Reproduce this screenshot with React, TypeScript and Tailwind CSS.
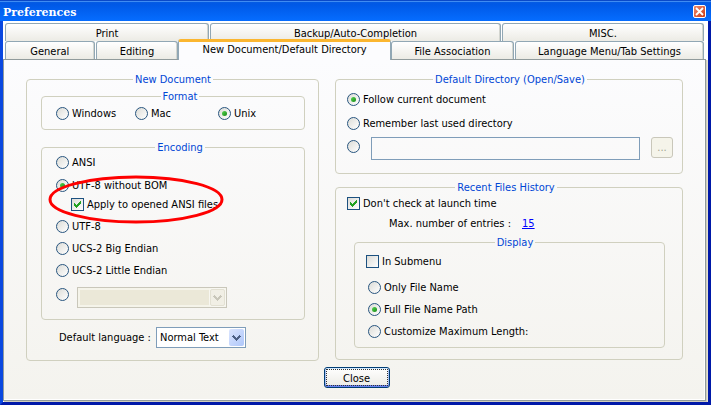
import type { ReactNode } from "react";

type TabProps = { label: string; width: string };

function Tab({ label, width }: TabProps) {
  return (
    <button
      type="button"
      role="tab"
      aria-selected={false}
      className={`${width} h-[18px] min-w-0 whitespace-nowrap rounded-t-[3px] border border-b-0 border-[#91a7b4] bg-linear-to-b from-white to-[#ecebe5] pt-[2px] text-center leading-[15px] shadow-[inset_-1px_0_0_#d3d5cf]`}
    >
      {label}
    </button>
  );
}

type GroupProps = { title: string; className?: string; children: ReactNode };

function Group({ title, className = "", children }: GroupProps) {
  return (
    <fieldset className={`min-w-0 rounded-[4px] border border-[#d0d0bf] ${className}`}>
      <legend className="mx-auto px-[2px] leading-[13px] text-[#0046d5]">{title}</legend>
      {children}
    </fieldset>
  );
}

type ChoiceProps = { label: string; name?: string; checked?: boolean; hideLabel?: boolean };

function RadioChoice({ label, name, checked = false, hideLabel = false }: ChoiceProps) {
  return (
    <label className="flex h-[15px] items-center gap-[3px] whitespace-nowrap">
      <span className="grid shrink-0 place-items-center">
        <input
          type="radio"
          name={name}
          defaultChecked={checked}
          aria-label={hideLabel ? label : undefined}
          className="peer col-start-1 row-start-1 size-[13px] appearance-none rounded-full border border-[#28557f] bg-linear-to-br from-[#dcdcd7] to-white"
        />
        <span className="pointer-events-none col-start-1 row-start-1 hidden size-[5px] rounded-full bg-linear-to-br from-[#55d551] to-[#138a12] peer-checked:block" />
      </span>
      {!hideLabel && <span className="pt-[2px]">{label}</span>}
    </label>
  );
}

function CheckChoice({ label, checked = false }: ChoiceProps) {
  return (
    <label className="flex h-[15px] items-center gap-[3px] whitespace-nowrap">
      <span className="grid shrink-0 place-items-center">
        <input
          type="checkbox"
          defaultChecked={checked}
          className="peer col-start-1 row-start-1 size-[13px] appearance-none border border-[#1c5180] bg-linear-to-br from-[#dcdcd7] to-white"
        />
        <svg
          viewBox="0 0 7 7"
          className="pointer-events-none col-start-1 row-start-1 hidden size-[7px] fill-[#21a121] peer-checked:block"
          shapeRendering="crispEdges"
          aria-hidden="true"
        >
          <path d="M0 2h1v1h1v1h1V3h1V2h1V1h1V0h1v3H6v1H5v1H4v1H3v1H2V6H1V5H0z" />
        </svg>
      </span>
      <span className="pt-[2px]">{label}</span>
    </label>
  );
}

function Chevron({ className }: { className: string }) {
  return (
    <svg viewBox="0 0 9 6" className={`h-[6px] w-[9px] ${className}`} shapeRendering="crispEdges" aria-hidden="true">
      <path d="M0 1h1V0h1v1h1v1h1v1h1V2h1V1h1V0h1v1h1v1H8v1H7v1H6v1H5v1H4V5H3V4H2V3H1V2H0z" />
    </svg>
  );
}

export default function App() {
  return (
    <div className="bg-[#0831d9] font-['DejaVu_Sans_Condensed','Noto_Sans',sans-serif] text-[11px] text-black">
      <header className="flex h-[21px] items-center justify-between bg-linear-to-b from-[#0b5fe0] from-0% via-[#0058e6] via-20% to-[#066dff] pr-[5px] pl-[3px] shadow-[inset_0_1px_0_#0a49c8,inset_0_2px_0_#3f8cf3]">
        <h1 className="pt-[4px] font-['DejaVu_Serif',serif] text-[11px] leading-4 font-bold text-white">
          Preferences
        </h1>
        <button
          type="button"
          aria-label="Close window"
          className="mt-[2px] grid size-[13px] place-items-center rounded-[2px] border border-white bg-linear-to-br from-[#ee8a6c] to-[#c9370c]"
        >
          <svg viewBox="0 0 9 9" className="size-[9px] stroke-white" strokeWidth="1.8" aria-hidden="true">
            <path d="M1 1L8 8M8 1L1 8" />
          </svg>
        </button>
      </header>

      <div className="border-r-[3px] border-b-[3px] border-l-[3px] border-r-[#0019a8] border-b-[#0019a8] border-l-[#0a48e0]">
        <main className="bg-white pr-[1px] pb-[1px] text-center">
          <div className="pr-[3px] pl-[2px] pt-[2px]">
            <div role="tablist" aria-label="More preference pages" className="flex gap-px">
              <Tab label="Print" width="flex-[204]" />
              <Tab label="Backup/Auto-Completion" width="flex-[291]" />
              <Tab label="MISC." width="flex-[202]" />
            </div>
            <div role="tablist" aria-label="Preference pages" className="flex gap-px">
              <Tab label="General" width="flex-[89]" />
              <Tab label="Editing" width="flex-[82]" />
              <button
                type="button"
                role="tab"
                aria-selected={true}
                className="relative z-10 -mx-px -mt-[2px] -mb-px h-[21px] min-w-0 flex-[214] whitespace-nowrap rounded-t-[3px] border-x border-t-[3px] border-x-[#91a7b4] border-t-[#fbb630] bg-[#fcfcfe] pb-[3px] leading-[15px]"
              >
                New Document/Default Directory
              </button>
              <Tab label="File Association" width="flex-[123]" />
              <Tab label="Language Menu/Tab Settings" width="flex-[190]" />
            </div>
          </div>

          <div
            role="tabpanel"
            aria-label="New Document/Default Directory"
            className="mr-px border border-[#919b9c] bg-linear-to-b from-[#fcfcfe] to-[#f4f3ee] px-[22px] pt-[13px] pb-[12px] text-left shadow-[1px_1px_0_0_#d0cebf,2px_1px_0_0_#e5e2d2,inset_-1px_-1px_0_0_#ffffff]"
          >
            <div className="grid grid-cols-[293fr_348fr] items-start gap-4">
              <Group title="New Document" className="pt-[4px] pr-[13px] pb-[12px] pl-[14px]">
                <Group title="Format" className="pt-[3px] pb-[8px] pl-[14px]">
                  <div className="grid grid-cols-[79px_83px_1fr]">
                    <RadioChoice name="format" label="Windows" />
                    <RadioChoice name="format" label="Mac" />
                    <RadioChoice name="format" label="Unix" checked />
                  </div>
                </Group>

                <Group title="Encoding" className="relative mt-[11px] pt-px pb-[11px] pl-[14px]">
                  <div className="flex flex-col items-start">
                    <RadioChoice name="encoding" label="ANSI" />
                    <div className="mt-2 flex flex-col gap-1">
                      <RadioChoice name="encoding" label="UTF-8 without BOM" checked />
                      <div className="pl-[15px]">
                        <CheckChoice label="Apply to opened ANSI files" checked />
                      </div>
                    </div>
                    <div className="mt-[7px] flex flex-col gap-[7px]">
                      <RadioChoice name="encoding" label="UTF-8" />
                      <RadioChoice name="encoding" label="UCS-2 Big Endian" />
                      <RadioChoice name="encoding" label="UCS-2 Little Endian" />
                    </div>
                    <div className="mt-[9px] flex items-start gap-[8px]">
                      <RadioChoice name="encoding" label="Other character set" hideLabel />
                      <div className="grid items-center">
                        <select
                          disabled
                          aria-label="Character set"
                          className="col-start-1 row-start-1 h-[21px] w-[150px] appearance-none border border-[#c9c7ba] bg-[#ebe8d8] opacity-100 shadow-[inset_0_0_0_2px_#f5f4ea]"
                        />
                        <span className="pointer-events-none col-start-1 row-start-1 mr-[2px] grid h-[17px] w-[15px] place-items-center justify-self-end rounded-[2px] border border-[#e3e1d3] bg-[#f1efe5] shadow-[0_0_0_1px_#f8f7f1]">
                          <Chevron className="fill-[#c9c7ba]" />
                        </span>
                      </div>
                    </div>
                  </div>
                  <svg
                    viewBox="0 0 176 49"
                    className="pointer-events-none absolute top-[21px] left-[6px] h-[49px] w-[176px]"
                    fill="none"
                    stroke="#fe0000"
                    strokeWidth="3"
                    aria-hidden="true"
                  >
                    <ellipse cx="88" cy="24.5" rx="86" ry="22.5" />
                  </svg>
                </Group>

                <div className="mt-[7px] flex items-center gap-[6px] pl-[18px]">
                  <label htmlFor="default-language" className="w-[91px] pt-[2px] whitespace-nowrap">
                    Default language :
                  </label>
                  <div className="grid items-center">
                    <select
                      id="default-language"
                      defaultValue="Normal Text"
                      className="col-start-1 row-start-1 h-[21px] w-[90px] appearance-none border border-[#7f9db9] bg-white pt-[2px] pl-[3px]"
                    >
                      <option>Normal Text</option>
                    </select>
                    <span className="pointer-events-none col-start-1 row-start-1 mr-[2px] grid h-[17px] w-[15px] place-items-center justify-self-end rounded-[2px] bg-linear-to-br from-[#dbe5fe] to-[#afc7fa]">
                      <Chevron className="fill-[#4d6185]" />
                    </span>
                  </div>
                </div>
              </Group>

              <div className="flex min-w-0 flex-col gap-[7px]">
                <Group title="Default Directory (Open/Save)" className="pt-[6px] pr-[9px] pb-[13px] pl-[11px]">
                  <div className="flex flex-col items-start gap-[9px]">
                    <RadioChoice name="directory" label="Follow current document" checked />
                    <RadioChoice name="directory" label="Remember last used directory" />
                  </div>
                  <div className="mt-[6px] flex items-start gap-[11px]">
                    <div className="flex min-w-0 grow items-start gap-[11px]">
                      <div className="pt-[2px]">
                        <RadioChoice name="directory" label="Custom directory" hideLabel />
                      </div>
                      <input
                        type="text"
                        aria-label="Directory path"
                        className="h-[23px] w-full min-w-0 border border-[#7f9db9] bg-transparent px-1"
                      />
                    </div>
                    <button
                      type="button"
                      aria-label="Browse"
                      className="h-[21px] w-[22px] shrink-0 rounded-[3px] border border-[#c9c7ba] bg-[#f5f4ea] pt-[2px] text-[#a1a192]"
                    >
                      ...
                    </button>
                  </div>
                </Group>

                <Group title="Recent Files History" className="pt-[2px] pr-[17px] pb-[11px] pl-[11px]">
                  <CheckChoice label="Don't check at launch time" checked />
                  <div className="mt-[5px] flex h-[15px] items-center pt-[2px] pl-[42px]">
                    <span className="w-[133px] whitespace-nowrap">Max. number of entries :</span>
                    <a href="#entries" className="text-[#0000ff] underline">
                      15
                    </a>
                  </div>
                  <Group title="Display" className="mt-[5px] ml-[7px] pt-[5px] pb-[8px] pl-[11px]">
                    <CheckChoice label="In Submenu" />
                    <div className="mt-[11px] flex flex-col items-start gap-[7px] pl-[2px]">
                      <RadioChoice name="display" label="Only File Name" />
                      <RadioChoice name="display" label="Full File Name Path" checked />
                      <RadioChoice name="display" label="Customize Maximum Length:" />
                    </div>
                  </Group>
                </Group>
              </div>
            </div>

            <div className="mt-[6px] flex justify-center pl-[4px]">
              <button
                type="button"
                className="h-[21px] w-[66px] rounded-[3px] border border-[#003c74] bg-linear-to-b from-white to-[#ecebe5] p-px shadow-[inset_0_1px_0_#cee7ff,inset_0_-2px_0_#6982ee,inset_1px_0_0_#a9c3f5,inset_-1px_0_0_#a9c3f5]"
              >
                <span className="block h-full border border-dotted border-[#333333] leading-[17px]">Close</span>
              </button>
            </div>
          </div>
        </main>
      </div>
    </div>
  );
}
